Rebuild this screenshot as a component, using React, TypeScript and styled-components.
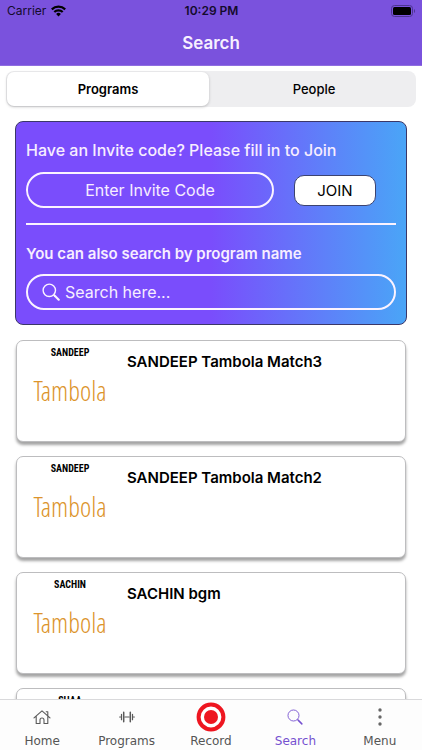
import React, { useState } from 'react';
import styled, { createGlobalStyle } from 'styled-components';

const GlobalStyle = createGlobalStyle`
  * { box-sizing: border-box; }
  html, body { margin: 0; background: #fff; }
  body { font-family: Inter, "Liberation Sans", sans-serif; color: #000; }
  button, input { font-family: inherit; margin: 0; }
`;

const Screen = styled.div`
  display: flex;
  flex-direction: column;
  height: 100vh;
  overflow: hidden;
`;

const Header = styled.header`
  flex: none;
  background: #7a52dd;
  border-bottom: 1px solid #8f6ee0;
`;

const StatusBar = styled.div`
  display: grid;
  grid-template-columns: 1fr auto 1fr;
  align-items: center;
  height: 22px;
  padding: 0 6px 0 7px;
  font-size: 12px;
  line-height: 22px;
  color: #140b2c;
`;

const Carrier = styled.span`
  display: flex;
  align-items: center;
  gap: 5px;
`;

const Clock = styled.span`
  font-weight: 600;
`;

const BatterySlot = styled.span`
  display: flex;
  justify-content: flex-end;
`;

const Title = styled.h1`
  margin: 0;
  height: 43px;
  font-size: 17px;
  font-weight: 600;
  line-height: 43px;
  text-align: center;
  color: #f7f0ff;
`;

const Segments = styled.div`
  flex: none;
  display: flex;
  gap: 4px;
  margin: 5px 6px 0;
  padding: 1px;
  height: 36px;
  border-radius: 8px;
  background: #eeeef0;
`;

const Segment = styled.button<{ $active: boolean }>`
  flex: 1;
  border: 0;
  padding: 0;
  border-radius: 7px;
  font-size: 13px;
  font-weight: ${(p) => (p.$active ? 600 : 500)};
  color: #000;
  background: ${(p) => (p.$active ? '#fff' : 'transparent')};
  box-shadow: ${(p) => (p.$active ? '0 1px 3px rgba(0, 0, 0, 0.22)' : 'none')};
`;

const Content = styled.main`
  flex: 1;
  min-height: 0;
  margin-top: 14px;
  overflow-y: auto;
  scrollbar-width: none;
`;

const SearchPanel = styled.section`
  margin: 0 15px;
  padding: 18px 10px 14px;
  border: 1px solid #3b3768;
  border-radius: 8px;
  background: linear-gradient(90deg, #7a4dfc 0%, #7a4dfc 50%, #4aa5f7 100%);
`;

const PanelLabel = styled.label<{ $small?: boolean }>`
  display: block;
  font-size: ${(p) => (p.$small ? 15 : 16)}px;
  font-weight: ${(p) => (p.$small ? 600 : 500)};
  line-height: 20px;
  white-space: nowrap;
  color: #f7edff;
`;

const InviteForm = styled.form`
  display: flex;
  align-items: center;
  gap: 20px;
  margin-top: 12px;
  padding-right: 20px;
`;

const InviteInput = styled.input`
  flex: 1;
  min-width: 0;
  height: 36px;
  padding: 0 16px;
  border: 2px solid #fbf3ff;
  border-radius: 18px;
  outline: 0;
  background: transparent;
  font-size: 16px;
  text-align: center;
  color: #fff;
  &::placeholder { color: #f7edff; opacity: 1; }
`;

const JoinButton = styled.button`
  width: 82px;
  height: 31px;
  padding: 0;
  border: 1px solid #3c4370;
  border-radius: 10px;
  background: #fff;
  font-size: 15px;
  color: #000;
`;

const Divider = styled.hr`
  height: 2px;
  margin: 15px 0 19px;
  border: 0;
  background: #fbf3ff;
`;

const SearchField = styled.div`
  display: flex;
  align-items: center;
  gap: 5px;
  height: 36px;
  margin-top: 10px;
  padding: 0 14px;
  border: 2px solid #fbf3ff;
  border-radius: 18px;
  color: #fbf3ff;
`;

const SearchInput = styled.input`
  flex: 1;
  min-width: 0;
  height: 28px;
  padding: 0;
  border: 0;
  outline: 0;
  background: transparent;
  font-size: 16px;
  color: #fff;
  &::placeholder { color: #f7edff; opacity: 1; }
`;

const ProgramList = styled.ul`
  display: flex;
  flex-direction: column;
  gap: 14px;
  margin: 15px 16px;
  padding: 0;
  list-style: none;
`;

const ProgramCard = styled.li`
  display: flex;
  height: 102px;
  border: 1px solid #bdbdbf;
  border-radius: 7px;
  background: #fff;
  box-shadow: 0 3px 3px rgba(0, 0, 0, 0.36);
`;

const Poster = styled.div`
  display: flex;
  flex-direction: column;
  align-items: center;
  flex: none;
  width: 102px;
  margin-left: 2px;
  padding-top: 5px;
`;

const PosterName = styled.span`
  font-family: "Liberation Sans Narrow", "Roboto Condensed", "Liberation Sans", sans-serif;
  font-size: 10px;
  font-weight: 700;
  line-height: 14px;
`;

const PosterGame = styled.span`
  margin-top: 16px;
  font-family: "Open Sans Condensed Light", "Roboto Condensed Light", "Open Sans", sans-serif;
  font-size: 27px;
  font-weight: 300;
  line-height: 30px;
  color: #dc942c;
`;

const ProgramTitle = styled.h2`
  margin: 11px 0 0 6px;
  font-size: 15px;
  font-weight: 600;
  line-height: 20px;
`;

const TabBar = styled.nav`
  flex: none;
  display: grid;
  grid-template-columns: repeat(5, 1fr);
  height: 51px;
  border-top: 1px solid #d9d9db;
  background: #fdfdfd;
`;

const Tab = styled.a<{ $active?: boolean }>`
  display: flex;
  flex-direction: column;
  align-items: center;
  font-family: "DejaVu Sans", sans-serif;
  font-size: 12px;
  line-height: 14px;
  text-decoration: none;
  color: ${(p) => (p.$active ? '#7550d0' : '#555')};
`;

const TabIcon = styled.span`
  display: flex;
  align-items: center;
  justify-content: center;
  height: 34px;
`;

const WifiIcon = () => (
  <svg width="15" height="12" viewBox="0 0 15 12" aria-hidden="true">
    <g fill="none" stroke="#000" strokeWidth="2.2">
      <path d="M0.8 4.4a9.6 9.6 0 0 1 13.4 0" />
      <path d="M3.3 7a6 6 0 0 1 8.4 0" />
    </g>
    <path d="M7.5 11.4 5.1 8.9a3.5 3.5 0 0 1 4.8 0z" fill="#000" />
  </svg>
);

const BatteryIcon = () => (
  <svg width="25" height="12" viewBox="0 0 25 12" aria-hidden="true">
    <rect x="0.5" y="0.5" width="21" height="11" rx="3" fill="none" stroke="#4c3590" />
    <rect x="2" y="2" width="18" height="8" rx="1.5" fill="#000" />
    <path d="M23 4c1.4.5 1.4 3.5 0 4z" fill="#4c3590" />
  </svg>
);

const MagnifierIcon = ({ size, stroke }: { size: number; stroke: number }) => (
  <svg width={size} height={size} viewBox="0 0 18 18" fill="none" stroke="currentColor" aria-hidden="true">
    <circle cx="7.3" cy="7.3" r="6.2" strokeWidth={stroke} />
    <path d="m11.8 11.8 1 1" strokeWidth={stroke} />
    <path d="m12.5 12.5 4.2 4.2" strokeWidth={stroke + 0.7} strokeLinecap="round" />
  </svg>
);

const HomeIcon = () => (
  <svg width="18" height="16" viewBox="0 0 18 16" fill="none" stroke="#5a5a5a" strokeWidth="1.1" strokeLinecap="round" strokeLinejoin="round" aria-hidden="true">
    <path d="M1 8.8 9 1.8l8 7M3.2 7.2v7.3h3.8V11a2 2 0 0 1 4 0v3.5h3.8V7.2M13.2 2.7h1.6v4" />
  </svg>
);

const DumbbellIcon = () => (
  <svg width="16" height="14" viewBox="0 0 16 14" fill="none" stroke="#5a5a5a" strokeLinecap="round" aria-hidden="true">
    <path d="M5.8 7h4.4M.6 7h1M14.4 7h1" strokeWidth="1.1" />
    <path d="M4.7 2.2v9.6M11.3 2.2v9.6" strokeWidth="1.5" />
    <path d="M2.5 4.3v5.4M13.5 4.3v5.4" strokeWidth="1.2" />
  </svg>
);

const RecordIcon = () => (
  <svg width="30" height="30" viewBox="0 0 30 30" aria-hidden="true">
    <circle cx="15" cy="15" r="12.4" fill="#fff" stroke="#ee1620" strokeWidth="4" />
    <circle cx="15" cy="15" r="7" fill="#ee1620" />
  </svg>
);

const DotsIcon = () => (
  <svg width="4" height="18" viewBox="0 0 4 18" fill="#666" aria-hidden="true">
    <circle cx="2" cy="2" r="1.7" />
    <circle cx="2" cy="9" r="1.7" />
    <circle cx="2" cy="16" r="1.7" />
  </svg>
);

const programs = [
  { host: 'SANDEEP', title: 'SANDEEP Tambola Match3' },
  { host: 'SANDEEP', title: 'SANDEEP Tambola Match2' },
  { host: 'SACHIN', title: 'SACHIN bgm' },
  { host: 'SHAA', title: '' },
];

const tabs = [
  { label: 'Home', icon: <HomeIcon /> },
  { label: 'Programs', icon: <DumbbellIcon /> },
  { label: 'Record', icon: <RecordIcon /> },
  { label: 'Search', icon: <MagnifierIcon size={16} stroke={1} />, active: true },
  { label: 'Menu', icon: <DotsIcon /> },
];

export default function App() {
  const [segment, setSegment] = useState('Programs');
  return (
    <Screen>
      <GlobalStyle />
      <Header>
        <StatusBar>
          <Carrier>Carrier <WifiIcon /></Carrier>
          <Clock>10:29 PM</Clock>
          <BatterySlot><BatteryIcon /></BatterySlot>
        </StatusBar>
        <Title>Search</Title>
      </Header>
      <Segments>
        {['Programs', 'People'].map((name) => (
          <Segment key={name} type="button" aria-pressed={segment === name} $active={segment === name} onClick={() => setSegment(name)}>
            {name}
          </Segment>
        ))}
      </Segments>
      <Content>
        <SearchPanel>
          <PanelLabel htmlFor="invite">Have an Invite code? Please fill in to Join</PanelLabel>
          <InviteForm onSubmit={(e) => e.preventDefault()}>
            <InviteInput id="invite" placeholder="Enter Invite Code" />
            <JoinButton type="submit">JOIN</JoinButton>
          </InviteForm>
          <Divider />
          <PanelLabel htmlFor="search" $small>You can also search by program name</PanelLabel>
          <SearchField>
            <MagnifierIcon size={18} stroke={1.4} />
            <SearchInput id="search" placeholder="Search here..." />
          </SearchField>
        </SearchPanel>
        <ProgramList>
          {programs.map((program, i) => (
            <ProgramCard key={i}>
              <Poster>
                <PosterName>{program.host}</PosterName>
                <PosterGame>Tambola</PosterGame>
              </Poster>
              {program.title && <ProgramTitle>{program.title}</ProgramTitle>}
            </ProgramCard>
          ))}
        </ProgramList>
      </Content>
      <TabBar>
        {tabs.map((tab) => (
          <Tab key={tab.label} href="#" $active={tab.active} aria-current={tab.active ? 'page' : undefined}>
            <TabIcon>{tab.icon}</TabIcon>
            {tab.label}
          </Tab>
        ))}
      </TabBar>
    </Screen>
  );
}
